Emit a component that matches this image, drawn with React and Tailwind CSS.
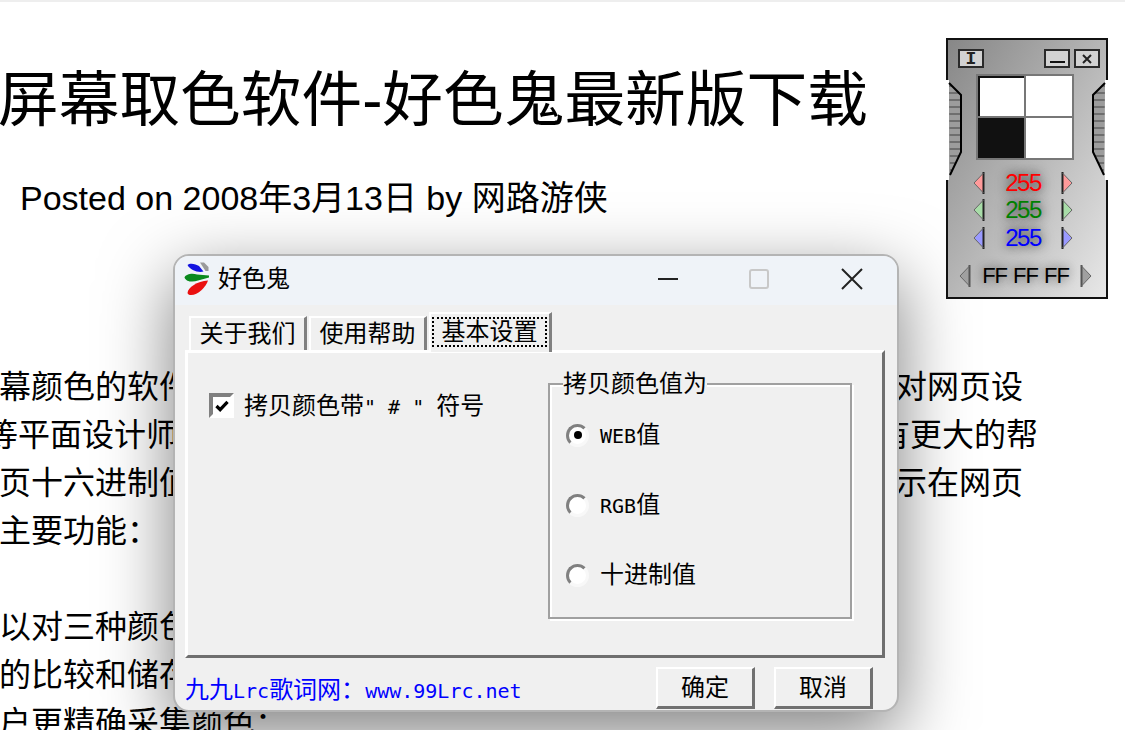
import React from "react";

const cjk = "font-['Liberation_Sans','Noto_Sans_CJK_SC',sans-serif]";
const mono = "font-['DejaVu_Sans_Mono','Noto_Sans_CJK_SC',monospace]";

const lines = [
  { left: "幕颜色的软件", right: "对网页设", cls: "w-[1024px] ml-[-1px]" },
  { left: "等平面设计师", right: "有更大的帮", cls: "w-[1052px] ml-[-14px]" },
  { left: "页十六进制值", right: "示在网页", cls: "w-[1024px] ml-[-1px]" },
  { left: "主要功能：", right: "", cls: "w-[1024px] ml-[-1px]" },
  { left: "\u00a0", right: "", cls: "w-[1024px]" },
  { left: "以对三种颜色", right: "", cls: "w-[1024px] ml-[-1px]" },
  { left: "的比较和储存", right: "", cls: "w-[1024px] ml-[-1px]" },
  { left: "户更精确采集颜色：", right: "", cls: "w-[1024px] ml-[-1px]" },
];

function Logo() {
  return (
    <svg width="26" height="34" viewBox="0 0 26 34" className="shrink-0">
      <path d="M16 0.5 L20 0.5 L24.5 5 L24.5 9 L21.5 9 Z" fill="#9a9a9a" />
      <path d="M3.5 3 C6 0.5 12 2 15 4 L19.5 9.5 C14 11 6 8 3.5 3 Z" fill="#1414e0" />
      <path d="M0.5 15.5 C2 11.5 9 11 13 12.5 L25 13.5 L25 15.5 L14 18.5 C9 20.5 2 20 0.5 15.5 Z" fill="#0a8a1e" />
      <path d="M3.5 31 C4 25 13 19.5 24 18.5 C22 25 14 33 7 33 C5 33 4 32.5 3.5 31 Z" fill="#ea1010" />
    </svg>
  );
}

function Arrow({ dir, fill, stroke = "#222" }) {
  // left/right pointing triangle with a dark straight edge
  const left = dir === "left";
  return (
    <svg width="12" height="22" viewBox="0 0 12 22" className="shrink-0">
      <path d={left ? "M10.5 1 V21 L1 11 Z" : "M1.5 1 V21 L11 11 Z"} fill={fill} />
      <path d={left ? "M10.5 0 V22" : "M1.5 0 V22"} stroke={stroke} strokeWidth="2" />
      <path d={left ? "M10.5 1 L1 11 L10.5 21" : "M1.5 1 L11 11 L1.5 21"} stroke="#666" strokeWidth="1" fill="none" />
    </svg>
  );
}

function ValueRow({ color, fill, value }) {
  return (
    <div className="flex items-center justify-center h-[27.5px] gap-[20px] pr-[8px]">
      <Arrow dir="left" fill={fill} />
      <span
        className={`w-[36px] text-center text-[24px] leading-[24px] tracking-[-1.5px] font-['Liberation_Sans',sans-serif] [text-shadow:0_0_9px_rgba(0,0,0,0.55),0_0_14px_rgba(0,0,0,0.4)] ${color}`}
      >
        {value}
      </span>
      <Arrow dir="right" fill={fill} />
    </div>
  );
}

function SkinButton({ children }) {
  return (
    <div className="w-[26px] h-[19px] border-2 border-[#2a2a2a] bg-[#d2d2d2] flex items-center justify-center">
      {children}
    </div>
  );
}

function Grip({ flip }) {
  return (
    <svg
      width="18"
      height="100"
      viewBox="0 0 18 100"
      className={`absolute top-[40px] ${flip ? "right-[-2px] -scale-x-100" : "left-[-2px]"}`}
    >
      <defs>
        <pattern id={flip ? "stripeR" : "stripeL"} width="6" height="7" patternUnits="userSpaceOnUse">
          <rect width="6" height="7" fill="#9c9c9c" />
          <rect y="5" width="6" height="2" fill="#6e6e6e" />
        </pattern>
      </defs>
      <rect x="0" y="0" width="3" height="100" fill="#fff" />
      <path d="M3 3 L15 15 V72 L4 95 Z" fill={`url(#${flip ? "stripeR" : "stripeL"})`} />
      <path d="M3 3 L15 15 V72 L4 95" fill="none" stroke="#000" strokeWidth="2" />
    </svg>
  );
}

function ColorWidget() {
  return (
    <div className="absolute left-[946px] top-[36px] w-[162px] h-[261px] border-2 border-[#111] bg-linear-to-br from-[#878787] to-[#e8e8e8]">
      <Grip />
      <Grip flip />
      <div className="flex items-center pt-[9px] pl-[10px] pr-[6px]">
        <SkinButton>
          <span className="text-[18px] leading-none font-['Liberation_Mono',monospace] font-bold text-[#222]">I</span>
        </SkinButton>
        <div className="ml-auto flex gap-[4px]">
          <SkinButton>
            <span className="w-[15px] h-[2px] mt-[6px] bg-[#111]" />
          </SkinButton>
          <SkinButton>
            <svg width="10" height="10" viewBox="0 0 10 10">
              <path d="M1 1 L9 9 M9 1 L1 9" stroke="#222" strokeWidth="2" />
            </svg>
          </SkinButton>
        </div>
      </div>
      <div className="mt-[6px] ml-[28px] w-[98px] h-[86px] bg-[#777] p-[2px] grid grid-cols-2 grid-rows-2 gap-[2px]">
        <div className="bg-white border-l-2 border-t-2 border-[#111]" />
        <div className="bg-white" />
        <div className="bg-[#111]" />
        <div className="bg-white" />
      </div>
      <div className="mt-[9px]">
        <ValueRow color="text-[#ff0000]" fill="#ff9a9a" value="255" />
        <ValueRow color="text-[#008000]" fill="#a8dca8" value="255" />
        <ValueRow color="text-[#0000ff]" fill="#9a9aff" value="255" />
      </div>
      <div className="flex items-center justify-center gap-[11px] mt-[12px] pr-[3px]">
        <Arrow dir="left" fill="#a0a0a0" stroke="#555" />
        <span className="flex gap-[6px] text-[22px] leading-[24px] tracking-[-1px] text-black font-['Liberation_Sans',sans-serif] [text-shadow:0_0_9px_rgba(0,0,0,0.45),0_0_14px_rgba(0,0,0,0.3)]">
          <span>FF</span>
          <span>FF</span>
          <span>FF</span>
        </span>
        <Arrow dir="right" fill="#a0a0a0" stroke="#555" />
      </div>
    </div>
  );
}

function Tab({ label, active }) {
  if (active) {
    return (
      <div className="relative z-10 ml-[2px] w-[123px] h-[40px] border-l-2 border-t-2 border-white border-r-[3px] border-r-[#808080] bg-[#f0f0f0] pl-[1px] pr-[2px] pt-[3px] mb-[-2px]">
        <div className="h-[30px] border-2 border-dotted border-black flex items-center justify-center text-[24px] leading-none">
          {label}
        </div>
      </div>
    );
  }
  return (
    <div className="ml-[2px] first:ml-[4px] w-[118px] h-[34px] border-l-2 border-t-2 border-white border-r-[3px] border-r-[#808080] flex items-center justify-center text-[24px] leading-none">
      {label}
    </div>
  );
}

function Radio({ checked, children }) {
  return (
    <div className="flex items-center h-[24px] pl-[16px] gap-[11px]">
      <span className="w-[23px] h-[23px] rounded-full bg-white border-[3px] border-t-[#808080] border-l-[#808080] border-r-[#f8f8f8] border-b-[#f8f8f8] flex items-center justify-center">
        {checked && <span className="w-[8px] h-[8px] rounded-full bg-black" />}
      </span>
      <span className="text-[24px] leading-none whitespace-nowrap">{children}</span>
    </div>
  );
}

function Dialog() {
  return (
    <div
      className={`absolute left-[173px] top-[252px] w-[726px] h-[458px] rounded-[16px] overflow-hidden border-2 border-[#b4b4b4] bg-[#f0f0f0] text-black shadow-[0_22px_70px_rgba(0,0,0,0.5)] ${cjk}`}
    >
      {/* title bar */}
      <div className="h-[49px] bg-[#eff3f8] flex items-center pl-[9px] pb-[3px]">
        <Logo />
        <span className="ml-[8px] text-[24px] leading-none">好色鬼</span>
        <svg width="20" height="20" viewBox="0 0 20 20" className="ml-[368px]">
          <path d="M0 10 H20" stroke="#222" strokeWidth="2" />
        </svg>
        <span className="ml-[71px] w-[20px] h-[20px] rounded-[3px] border-2 border-[#c8c8c8]" />
        <svg width="22" height="22" viewBox="0 0 22 22" className="ml-[72px]">
          <path d="M1 1 L21 21 M21 1 L1 21" stroke="#222" strokeWidth="2" />
        </svg>
      </div>

      {/* tabs */}
      <div className="flex items-end h-[45px] pl-[10px]">
        <Tab label="关于我们" />
        <Tab label="使用帮助" />
        <Tab label="基本设置" active />
      </div>

      {/* panel */}
      <div className="relative ml-[10px] w-[700px] h-[308px] border-l-[3px] border-t-[3px] border-white border-r-[3px] border-r-[#6f6f6f] border-b-[3px] border-b-[#6f6f6f] flex">
        <div className="flex items-start pl-[21px] pt-[40px] w-[360px] gap-[10px]">
          <span className="w-[25px] h-[25px] shrink-0 bg-white border-[4px] border-t-[#808080] border-l-[#808080] border-r-white border-b-white flex items-center justify-center">
            <svg width="14" height="12" viewBox="0 0 15 13">
              <path d="M1.5 6.5 L5.5 10.5 L13.5 2" stroke="#000" strokeWidth="3.5" fill="none" />
            </svg>
          </span>
          <span className="text-[24px] leading-[25px] whitespace-nowrap">
            拷贝颜色带<span className={`text-[20px] whitespace-pre ${mono}`}>{'" # " '}</span>符号
          </span>
        </div>
        <fieldset className="mt-[19px] w-[304px] h-[247px] border-2 border-[#a0a0a0] shadow-[inset_2px_2px_0_#fff,2px_2px_0_#fff]">
          <legend className="ml-[13px] px-0 text-[24px] leading-[24px] bg-[#f0f0f0]">拷贝颜色值为</legend>
          <div className="flex flex-col gap-[46px] mt-[27px]">
            <Radio checked>
              <span className={`text-[20px] ${mono}`}>WEB</span>值
            </Radio>
            <Radio>
              <span className={`text-[20px] ${mono}`}>RGB</span>值
            </Radio>
            <Radio>十进制值</Radio>
          </div>
        </fieldset>
      </div>

      {/* footer */}
      <div className="flex items-start pl-[10px] pt-[9px] pr-[24px]">
        <span className="mt-[9px] text-[24px] leading-[28px] text-[#0000ff] whitespace-nowrap">
          九九<span className={`text-[20px] ${mono}`}>Lrc</span>歌词网：<span className={`text-[20px] ${mono}`}>www.99Lrc.net</span>
        </span>
        <button className="ml-auto w-[99px] h-[42px] border-l-2 border-t-2 border-white border-r-[3px] border-b-[3px] border-r-[#707070] border-b-[#707070] text-[24px] leading-none">
          确定
        </button>
        <button className="ml-[19px] w-[99px] h-[42px] border-l-2 border-t-2 border-white border-r-[3px] border-b-[3px] border-r-[#707070] border-b-[#707070] text-[24px] leading-none">
          取消
        </button>
      </div>
    </div>
  );
}

export default function App() {
  return (
    <div className={`relative w-[1125px] h-[730px] overflow-hidden bg-white text-black border-t-2 border-[#eeeeee] ${cjk}`}>
      <h1 className="mt-[62px] ml-[-2px] text-[60.7px] leading-[72px] whitespace-nowrap">屏幕取色软件-好色鬼最新版下载</h1>
      <p className="mt-[38px] ml-[20px] text-[34px] leading-[48px] whitespace-nowrap">Posted on 2008年3月13日 by 网路游侠</p>
      <div className="mt-[141px] text-[32px] leading-[48px]">
        {lines.map((l, i) => (
          <div key={i} className={`flex justify-between whitespace-nowrap ${l.cls}`}>
            <span>{l.left}</span>
            <span>{l.right}</span>
          </div>
        ))}
      </div>
      <Dialog />
      <ColorWidget />
    </div>
  );
}
